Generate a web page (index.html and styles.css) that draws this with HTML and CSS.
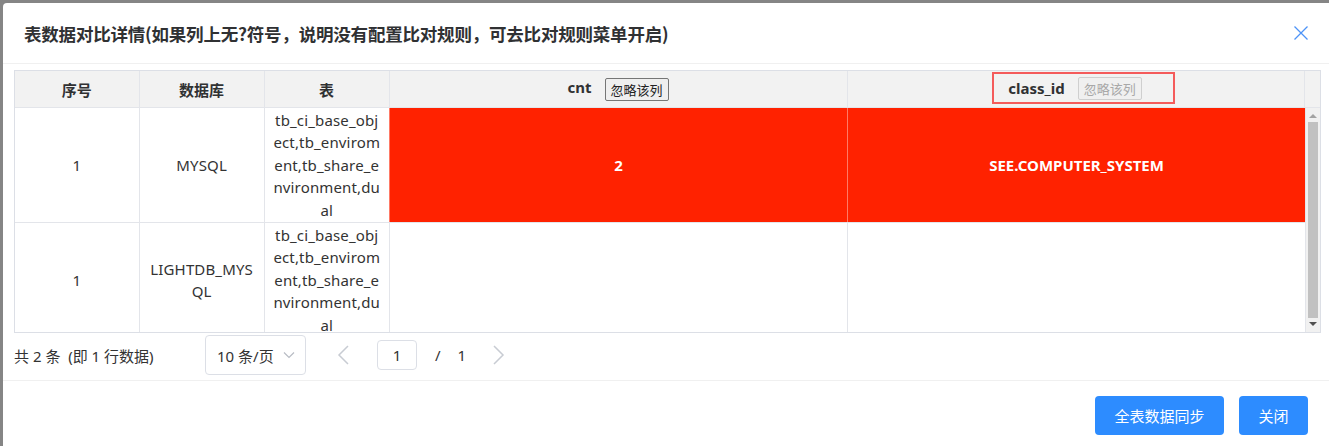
FILE: index.html
```html
<!DOCTYPE html>
<html lang="zh-CN">
<head>
<meta charset="utf-8">
<title>表数据对比详情</title>
<link rel="stylesheet" href="styles.css">
</head>
<body>
<div class="dialog">
	<div class="dlg_head">
		<h2 class="dlg_title">表数据对比详情(如果列上无?符号，说明没有配置比对规则，可去比对规则菜单开启)</h2>
		<a href="" class="dlg_close">
			<svg width="16" height="16" viewBox="0 0 16 16"><path d="M1.5 1.5 L14.5 14.5 M14.5 1.5 L1.5 14.5" stroke="#4d93f7" stroke-width="1.3" fill="none"/></svg>
		</a>
	</div>
	<div class="dlg_body">
		<div class="grid">
			<table class="grid_head">
				<colgroup><col class="c_no"><col class="c_db"><col class="c_tb"><col class="c_cnt"><col class="c_cls"><col class="c_bar"></colgroup>
				<tr>
					<th>序号</th>
					<th>数据库</th>
					<th>表</th>
					<th><span class="col_name">cnt</span><button class="ignore">忽略该列</button></th>
					<th><span class="mark"><span class="col_name">class_id</span><button class="ignore" disabled>忽略该列</button></span></th>
					<th></th>
				</tr>
			</table>
			<div class="grid_body">
				<div class="rows">
					<table class="grid_rows">
						<colgroup><col class="c_no"><col class="c_db"><col class="c_tb"><col class="c_cnt"><col class="c_cls"></colgroup>
						<tr>
							<td>1</td>
							<td>MYSQL</td>
							<td>tb_ci_base_object,tb_enviroment,tb_share_environment,dual</td>
							<td class="diff">2</td>
							<td class="diff">SEE.COMPUTER_SYSTEM</td>
						</tr>
						<tr>
							<td>1</td>
							<td>LIGHTDB_MYSQL</td>
							<td>tb_ci_base_object,tb_enviroment,tb_share_environment,dual</td>
							<td></td>
							<td></td>
						</tr>
					</table>
				</div>
				<div class="sbar">
					<span class="arr up"></span>
					<span class="thumb"></span>
					<span class="arr down"></span>
				</div>
			</div>
		</div>
		<div class="pager">
			<span class="total">共 2 条 &nbsp;(即 1 行数据)</span>
			<div class="size_sel">10 条/页
				<svg width="12" height="8" viewBox="0 0 12 8"><path d="M1 1.5 L6 6.5 L11 1.5" stroke="#b8bcc4" stroke-width="1.2" fill="none"/></svg>
			</div>
			<a href="" class="pg_arrow">
				<svg width="12" height="20" viewBox="0 0 12 20"><path d="M11 1 L2 10 L11 19" stroke="#c8ccd3" stroke-width="1.5" fill="none"/></svg>
			</a>
			<input class="pg_input" value="1">
			<span class="pg_slash">/</span>
			<span class="pg_count">1</span>
			<a href="" class="pg_arrow">
				<svg width="12" height="20" viewBox="0 0 12 20"><path d="M1 1 L10 10 L1 19" stroke="#c8ccd3" stroke-width="1.5" fill="none"/></svg>
			</a>
		</div>
	</div>
	<div class="dlg_foot">
		<button class="btn">全表数据同步</button>
		<button class="btn">关闭</button>
	</div>
</div>
</body>
</html>
```
FILE: styles.css
```css
* {margin:0; padding:0; box-sizing:border-box}
html, body {height:100%; overflow:hidden}
body {
	background-color:#858585;
	font-family:"Noto Sans", "Noto Sans CJK SC", sans-serif;
	font-size:15px;
	color:#333;
	padding:3px 0 0 3px;
}

.dialog {
	width:1330px;
	height:460px;
	background-color:#fff;
	border-radius:4px 0 0 0;
}
.dlg_head {
	display:flex;
	align-items:center;
	justify-content:space-between;
	height:61px;
	padding:0 24px 0 21px;
	border-bottom:1px solid #f0f0f0;
}
.dlg_title {
	font-family:"Noto Sans CJK SC", sans-serif;
	font-size:17.5px;
	font-weight:bold;
	color:#303133;
	letter-spacing:-0.2px;
}
.dlg_close {display:flex;}

.dlg_body {padding:6px 9px 0 11px;}
.grid {
	border:1px solid #dcdfe6;
	width:1307px;
}
table {
	border-collapse:collapse;
	table-layout:fixed;
}
.grid_head {width:1305px;}
.c_no {width:124px;}
.c_db, .c_tb {width:125px;}
.c_cnt {width:458px;}
.c_cls {width:457px;}
.c_bar {width:16px;}

.grid_head th {
	height:36px;
	background-color:#f2f2f2;
	border-left:1px solid #e3e5ea;
	font-weight:bold;
	font-size:15px;
	color:#303133;
	text-align:center;
}
.grid_head th:first-child {border-left:none;}
.col_name {margin-right:13px;}
.ignore {
	font-family:"Noto Sans CJK SC", sans-serif;
	font-size:13px;
	height:23px;
	padding:0 5px;
	border:1px solid #767676;
	border-radius:2px;
	background-color:#efefef;
	color:#222;
	vertical-align:middle;
}
.ignore:disabled {
	color:#a8a8a8;
	border-color:#cfcfcf;
	background-color:#f0f0f0;
}
.mark {
	display:inline-flex;
	align-items:center;
	height:32px;
	padding:0 31px 0 14px;
	border:2px solid #f45b5b;
	position:relative;
	left:8px;
	top:-1px;
}

.grid_body {
	display:flex;
	height:225px;
	overflow:hidden;
	border-top:1px solid #e3e5ea;
}
.rows {width:1290px; overflow:hidden;}
.grid_rows {width:1290px;}
.grid_rows td {
	height:114px;
	padding:1px 8px;
	border-left:1px solid #e3e5ea;
	border-bottom:1px solid #e3e5ea;
	line-height:22.4px;
	letter-spacing:0.15px;
	text-align:center;
	word-break:break-all;
	color:#333;
}
.grid_rows td:first-child {border-left:none;}
.grid_rows td.diff {
	background-color:#ff2200;
	color:#fff;
	font-weight:bold;
	letter-spacing:0;
	border-left-color:#ff7a66;
}
.grid_rows td.diff:first-of-type {border-left-color:#e3e5ea;}

.sbar {
	display:flex;
	flex-direction:column;
	align-items:center;
	width:15px;
	background-color:#f1f1f1;
	border-left:1px solid #e3e5ea;
	padding:2px 0;
}
.arr {
	width:0; height:0;
	border-left:4px solid transparent;
	border-right:4px solid transparent;
	margin:4px 0;
}
.arr.up {border-bottom:4px solid #a3a3a3;}
.arr.down {border-top:4px solid #505050;}
.thumb {
	flex:1;
	width:10px;
	background-color:#c1c1c1;
}

.pager {
	display:flex;
	align-items:center;
	height:47px;
	padding-bottom:3px;
	color:#333;
}
.total {width:191px;}
.size_sel {
	display:flex;
	align-items:center;
	justify-content:space-between;
	width:101px;
	height:40px;
	padding:0 10px 0 11px;
	border:1px solid #dcdfe6;
	border-radius:4px;
	margin-right:31px;
}
.pg_arrow {display:flex; width:12px;}
.pg_input {
	width:40px;
	height:30px;
	margin:0 18px 0 28px;
	border:1px solid #dcdfe6;
	border-radius:4px;
	text-align:center;
	font:15px "Noto Sans", sans-serif;
	color:#333;
}
.pg_slash {margin-right:17px;}
.pg_count {margin-right:27px;}

.dlg_foot {
	display:flex;
	justify-content:flex-end;
	gap:15px;
	border-top:1px solid #f0f0f0;
	padding:15px 25px 0 0;
}
.btn {
	height:39px;
	padding:0;
	border:none;
	border-radius:4px;
	background-color:#2d8cff;
	color:#fff;
	font-family:"Noto Sans CJK SC", sans-serif;
	font-size:15px;
	white-space:nowrap;
}
.btn:first-child {width:129px;}
.btn:last-child {width:69px;}
```
